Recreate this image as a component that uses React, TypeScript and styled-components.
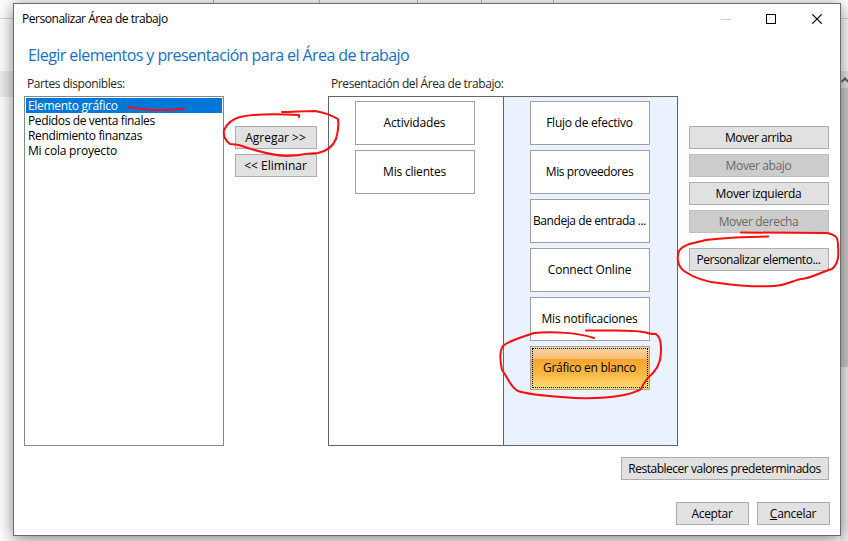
import React from "react";
import styled, { createGlobalStyle, css } from "styled-components";

const GlobalStyle = createGlobalStyle`
  * { box-sizing: border-box; }
  body { margin: 0; overflow: hidden; font-family: "Open Sans", "Noto Sans", sans-serif; font-size: 12px; color: #000; }
`;

const Desktop = styled.div`
  position: relative;
  width: 848px;
  height: 541px;
  padding: 3px 7px 5px 13px;
  overflow: hidden;
  background:
    linear-gradient(#b9b9b9, #b9b9b9) 213px 0 / 1px 3px no-repeat,
    linear-gradient(#b9b9b9, #b9b9b9) 319px 0 / 1px 3px no-repeat,
    linear-gradient(#b9b9b9, #b9b9b9) 417px 0 / 1px 3px no-repeat,
    linear-gradient(#b9b9b9, #b9b9b9) 481px 0 / 1px 3px no-repeat,
    linear-gradient(#b9b9b9, #b9b9b9) 553px 0 / 1px 3px no-repeat,
    linear-gradient(#d4d4d4, #d4d4d4) 0 18px / 100% 1px no-repeat,
    linear-gradient(#ededed, #ededed) 0 71px / 20px 26px no-repeat,
    linear-gradient(#e8e8e8, #e8e8e8) 840px 71px / 8px 17px no-repeat,
    linear-gradient(#cdcdcd, #cdcdcd) 840px 88px / 8px 279px no-repeat,
    linear-gradient(#f0f0f0, #f0f0f0) 840px 367px / 8px 174px no-repeat,
    #fff;
`;

const ScrollArrow = styled.svg`
  position: absolute;
  left: 841px;
  top: 76px;
`;

const Dialog = styled.div`
  position: relative;
  width: 828px;
  height: 533px;
  display: flex;
  flex-direction: column;
  background: #fff;
  border: 1px solid #6c6c6c;
  box-shadow: 0 3px 16px rgba(0, 0, 0, 0.5);
`;

const TitleBar = styled.div`
  height: 29px;
  flex: none;
  display: flex;
  align-items: center;
  justify-content: space-between;
  padding: 0 17px 0 8px;
`;

const WindowControls = styled.div`
  display: flex;
  gap: 35px;
  line-height: 0;
`;

const Text = styled.span<{ $spacing?: number }>`
  white-space: pre;
  letter-spacing: ${(p) => p.$spacing ?? 0}px;
`;

const Heading = styled.h1`
  height: 44px;
  flex: none;
  margin: 0;
  padding: 10px 0 0 14px;
  font-size: 16px;
  line-height: 24px;
  font-weight: 400;
  color: #1570c8;
`;

const Body = styled.div`
  display: grid;
  grid-template-columns: 200px 82px 350px 140px;
  column-gap: 11px;
  height: 369px;
  padding-left: 10px;
`;

const Column = styled.div`
  display: flex;
  flex-direction: column;
`;

const Caption = styled.div`
  height: 19px;
  flex: none;
  padding-left: 3px;
  line-height: 13px;
  color: #262626;
`;

const ListBox = styled.div`
  height: 350px;
  padding: 1px;
  border: 1px solid #828790;
`;

const ListItem = styled.div<{ $selected?: boolean }>`
  height: 15px;
  padding-left: 2px;
  line-height: 16px;
  ${(p) => p.$selected && css`background: #0078d7; color: #fff;`}
`;

const ButtonStack = styled.div`
  display: flex;
  flex-direction: column;
  gap: 5px;
  padding-top: 49px;
`;

const Button = styled.button<{ $width?: number; $gapAbove?: number }>`
  width: ${(p) => (p.$width ? `${p.$width}px` : "100%")};
  height: 23px;
  flex: none;
  margin: ${(p) => p.$gapAbove ?? 0}px 0 0;
  padding: 0 1px 0 0;
  display: flex;
  align-items: center;
  justify-content: center;
  font: inherit;
  color: #000;
  background: #e1e1e1;
  border: 1px solid #adadad;
  &:disabled {
    color: #696969;
    background: #ccc;
    border-color: #bfbfbf;
  }
`;

const Board = styled.div`
  width: 350px;
  height: 350px;
  display: grid;
  grid-template-columns: 174px 174px;
  border: 1px solid #646464;
`;

const Lane = styled.div<{ $active?: boolean }>`
  display: flex;
  flex-direction: column;
  gap: 5px;
  padding: 4px 0 0 26px;
  ${(p) => p.$active && css`background: #ebf2ff; border-left: 1px solid #646464;`}
`;

const Tile = styled.div<{ $selected?: boolean }>`
  width: 120px;
  height: 44px;
  flex: none;
  padding: 1px;
  display: flex;
  background: #fff;
  border: 1px solid #a0a0a0;
  ${(p) =>
    p.$selected &&
    css`background: linear-gradient(#fbd5a8 0, #f8bd70 12px, #f7a32c 12px, #f9b944 65%, #fddd72 100%);`}
`;

const TileFace = styled.div<{ $focused?: boolean }>`
  flex: 1;
  display: flex;
  align-items: center;
  justify-content: center;
  padding: 0 1px 1px 0;
  border: 1px ${(p) => (p.$focused ? "dotted #000" : "solid transparent")};
`;

const Footer = styled.div`
  display: flex;
  flex-direction: column;
  align-items: flex-end;
  gap: 22px;
  padding: 11px 10px 0 0;
`;

const FooterRow = styled.div<{ $shift?: number }>`
  display: flex;
  gap: 8px;
  margin-right: ${(p) => p.$shift ?? 0}px;
`;

const Ink = styled.svg`
  position: absolute;
  inset: 0;
  pointer-events: none;
`;

type Entry = { label: string; spacing: number; disabled?: boolean; gap?: number };

const available: Entry[] = [
  { label: "Elemento gráfico", spacing: -0.3 },
  { label: "Pedidos de venta finales", spacing: -0.37 },
  { label: "Rendimiento finanzas", spacing: -0.36 },
  { label: "Mi cola proyecto", spacing: -0.2 },
];

const leftLane: Entry[] = [
  { label: "Actividades", spacing: -0.15 },
  { label: "Mis clientes", spacing: -0.2 },
];

const rightLane: Entry[] = [
  { label: "Flujo de efectivo", spacing: -0.25 },
  { label: "Mis proveedores", spacing: -0.4 },
  { label: "Bandeja de entrada ...", spacing: -0.43 },
  { label: "Connect Online", spacing: -0.2 },
  { label: "Mis notificaciones", spacing: -0.22 },
  { label: "Gráfico en blanco", spacing: -0.3 },
];

const moves: Entry[] = [
  { label: "Mover arriba", spacing: -0.42 },
  { label: "Mover abajo", spacing: -0.35, disabled: true },
  { label: "Mover izquierda", spacing: -0.33 },
  { label: "Mover derecha", spacing: -0.35, disabled: true },
  { label: "Personalizar elemento...", spacing: -0.45, gap: 10 },
];

const strokes = [
  "M128 107 C141 109 158 112 184 108.5",
  "M299 117 L299 115 C280 114 258 113 240 117 C232 119 227 124 224 130 C223 136 226 141 230 144 L239 145 C253 150 270 155 287 156 C298 156 306 153 318 153 C328 151 333 146 336 139 C338 132 339 126 338 119 C331 115 322 112 315 111 C305 111 292 112 282 112",
  "M768 236.5 C747 237 727 237 706 240 C695 243 683 244 679 251 C676 260 678 266 684 271 C696 279 706 282 719 283 C739 286 756 287 774 286 C788 285 791 281 801 279 C812 278 821 272 832 269 C838 264 839 257 838 246 C838 238 837 235 827 233 L741 232.5",
  "M594 338 C579 333 554 331 534 333 C522 337 508 341 503 346 C499 352 500 361 502 370 C509 379 510 387 518 391 C527 394 547 396 562 397 C583 399 607 398 624 395 C632 393 637 392 641 389 C644 383 646 379 653 373 C660 365 661 358 661 348 C661 342 660 337 656 334 C652 334 650 334 648 333 C636 329 609 331 586 330.5",
];

export default function App() {
  return (
    <Desktop>
      <GlobalStyle />
      <Dialog>
        <TitleBar>
          <Text $spacing={-0.46}>Personalizar Área de trabajo</Text>
          <WindowControls>
            <svg width="10" height="10"><path d="M0 5.5H10" stroke="#ccc" /></svg>
            <svg width="10" height="10"><rect x=".5" y=".5" width="9" height="9" fill="none" stroke="#000" /></svg>
            <svg width="12" height="10"><path d="M1.3 .3 10.7 9.7M10.7 .3 1.3 9.7" stroke="#000" strokeWidth="1.1" /></svg>
          </WindowControls>
        </TitleBar>
        <Heading><Text $spacing={-0.57}>Elegir elementos y presentación para el Área de trabajo</Text></Heading>
        <Body>
          <Column>
            <Caption><Text $spacing={-0.42}>Partes disponibles:</Text></Caption>
            <ListBox>
              {available.map((item, i) => (
                <ListItem key={item.label} $selected={i === 0}>
                  <Text $spacing={item.spacing}>{item.label}</Text>
                </ListItem>
              ))}
            </ListBox>
          </Column>
          <ButtonStack>
            <Button><Text>{"Agregar >>"}</Text></Button>
            <Button><Text>{"<< Eliminar"}</Text></Button>
          </ButtonStack>
          <Column>
            <Caption><Text $spacing={-0.4}>Presentación del Área de trabajo:</Text></Caption>
            <Board>
              <Lane>
                {leftLane.map((t) => (
                  <Tile key={t.label}><TileFace><Text $spacing={t.spacing}>{t.label}</Text></TileFace></Tile>
                ))}
              </Lane>
              <Lane $active>
                {rightLane.map((t, i) => (
                  <Tile key={t.label} $selected={i === 5}>
                    <TileFace $focused={i === 5}><Text $spacing={t.spacing}>{t.label}</Text></TileFace>
                  </Tile>
                ))}
              </Lane>
            </Board>
          </Column>
          <ButtonStack>
            {moves.map((m) => (
              <Button key={m.label} disabled={m.disabled} $gapAbove={m.gap}>
                <Text $spacing={m.spacing}>{m.label}</Text>
              </Button>
            ))}
          </ButtonStack>
        </Body>
        <Footer>
          <FooterRow $shift={1}>
            <Button $width={208}><Text $spacing={-0.48}>Restablecer valores predeterminados</Text></Button>
          </FooterRow>
          <FooterRow>
            <Button $width={73}><Text $spacing={-0.3}>Aceptar</Text></Button>
            <Button $width={73}><Text $spacing={-0.3}><u>C</u>ancelar</Text></Button>
          </FooterRow>
        </Footer>
      </Dialog>
      <ScrollArrow width="8" height="8" viewBox="0 0 8 8">
        <path d="M0.5 6 L4 2.5 L7.5 6" fill="none" stroke="#505050" strokeWidth="2" />
      </ScrollArrow>
      <Ink width="848" height="541">
        {strokes.map((d) => (
          <path key={d} d={d} fill="none" stroke="#fb0d0d" strokeWidth="2" strokeLinecap="round" strokeLinejoin="round" />
        ))}
      </Ink>
    </Desktop>
  );
}
